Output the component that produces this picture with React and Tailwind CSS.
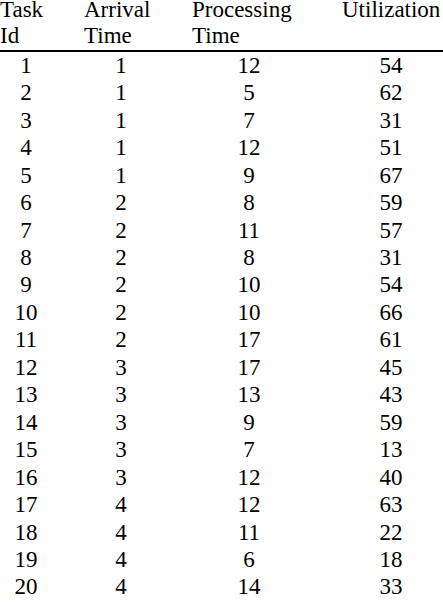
import React from "react";

const rows = [
  [1, 1, 12, 54],
  [2, 1, 5, 62],
  [3, 1, 7, 31],
  [4, 1, 12, 51],
  [5, 1, 9, 67],
  [6, 2, 8, 59],
  [7, 2, 11, 57],
  [8, 2, 8, 31],
  [9, 2, 10, 54],
  [10, 2, 10, 66],
  [11, 2, 17, 61],
  [12, 3, 17, 45],
  [13, 3, 13, 43],
  [14, 3, 9, 59],
  [15, 3, 7, 13],
  [16, 3, 12, 40],
  [17, 4, 12, 63],
  [18, 4, 11, 22],
  [19, 4, 6, 18],
  [20, 4, 14, 33],
];

function HeadCell({ lines, className }) {
  return (
    <div className={className}>
      {lines.map((l, i) => (
        <div key={i} className={i > 0 ? "mt-[6px]" : ""}>
          {l}
        </div>
      ))}
    </div>
  );
}

export default function App() {
  return (
    <div className="w-[443px] h-[603px] bg-white text-black overflow-hidden text-[23px] font-[Liberation_Serif,serif]">
      <div className="flex h-[46px] leading-[20px] whitespace-nowrap">
        <HeadCell className="w-[52px]" lines={["Task", "Id"]} />
        <HeadCell className="ml-[32px] w-[74px]" lines={["Arrival", "Time"]} />
        <HeadCell className="ml-[34px] w-[114px]" lines={["Processing", "Time"]} />
        <HeadCell className="ml-[36px] w-[98px]" lines={["Utilization"]} />
      </div>
      <div className="mt-[4px] h-[1.8px] w-[443px] bg-black" />
      <div className="leading-[27.45px]">
        {rows.map((r) => (
          <div key={r[0]} className="flex">
            <div className="w-[52px] text-center">{r[0]}</div>
            <div className="ml-[32px] w-[74px] text-center">{r[1]}</div>
            <div className="ml-[34px] w-[114px] text-center">{r[2]}</div>
            <div className="ml-[36px] w-[98px] text-center">{r[3]}</div>
          </div>
        ))}
      </div>
    </div>
  );
}
